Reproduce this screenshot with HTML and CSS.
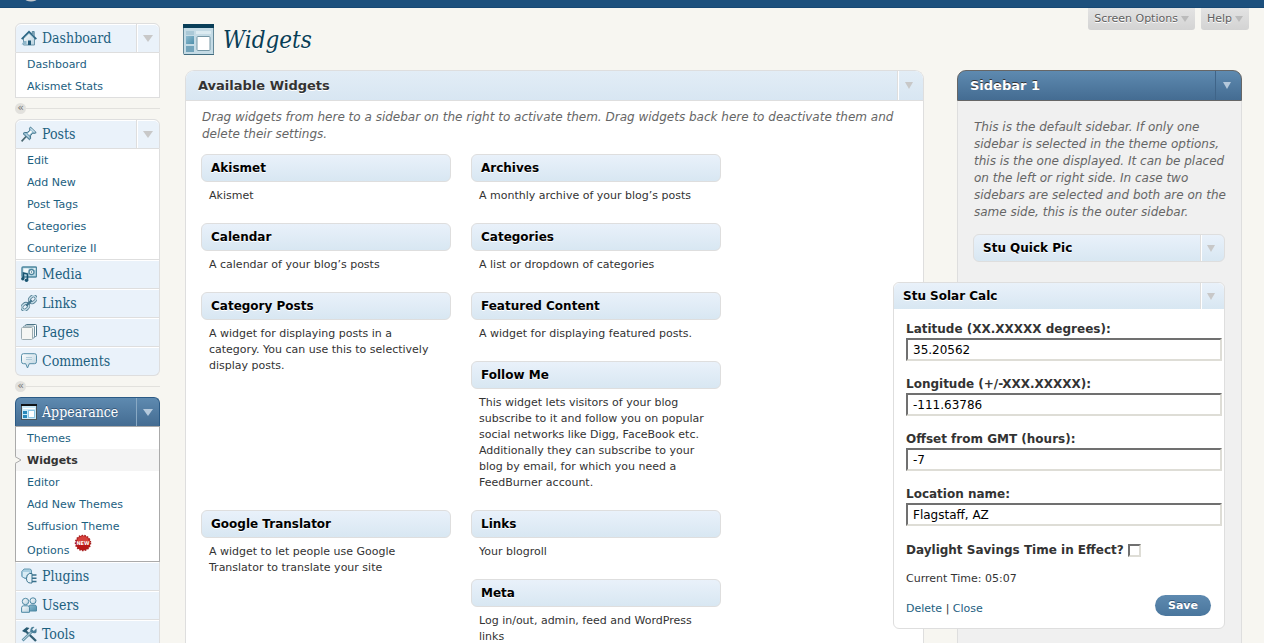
FILE: index.html
```html
<!DOCTYPE html>
<html lang="en">
<head>
<meta charset="utf-8">
<title>Widgets</title>
<link rel="stylesheet" href="styles.css">
</head>
<body>
<svg class="defs" aria-hidden="true">
  <defs>
    <linearGradient id="steel" x1="0" y1="0" x2="0" y2="1"><stop offset="0" stop-color="#bcdcec"/><stop offset="1" stop-color="#5f93ad"/></linearGradient>
    <linearGradient id="pale" x1="0" y1="0" x2="1" y2="1"><stop offset="0" stop-color="#ffffff"/><stop offset="1" stop-color="#b5cfdd"/></linearGradient>
    <linearGradient id="glass" x1="0" y1="0" x2="1" y2="1"><stop offset="0" stop-color="#8dbbd0"/><stop offset="1" stop-color="#4f8faa"/></linearGradient>
  </defs>
</svg>
<header class="topbar"><svg class="logo" width="16" height="2" viewBox="0 0 16 2"><ellipse cx="8" cy="-1" rx="6" ry="2.4" fill="#c3c8cd"/></svg></header>
<div class="page">
  <nav class="menu" aria-label="Main menu">
    <section class="group">
      <div class="top"><a href="#"><svg class="ico" viewBox="0 0 16 16"><path d="M2.500 8v7h11V8L8 3z" fill="url(#pale)" stroke="#6b95aa"/><path d="M.7 9.200 8 1.800l7.300 7.400" fill="none" stroke="#2d6785" stroke-width="1.800"/><path d="M3.500 8 8 3.600 12.500 8" fill="none" stroke="#b7d3e0"/><path d="M11.200 4V1.500h2V6" fill="#8eb0c2" stroke="#467892" stroke-width=".8"/><path d="M7 15v-4.500h3V15z" fill="#235c7a"/><path d="M.5 14.500h5V11H3z" fill="#8fb7cb"/></svg>Dashboard</a><button class="toggle" aria-label="Toggle Dashboard"></button></div>
      <ul><li><a href="#">Dashboard</a></li><li><a href="#">Akismet Stats</a></li></ul>
    </section>
    <button class="fold" aria-label="Collapse menu"><span>«</span></button>
    <section class="group">
      <div class="top"><a href="#"><svg class="ico" viewBox="0 0 16 16"><path d="M.6 15.400 6 9.500" stroke="#49666f" stroke-width="1.600"/><path d="M9.500 1 15.200 6.600 13.500 7.500 11.700 7 9.500 9.800 9.600 12.700 8.400 13.700 2 7.600 3.300 6.500 6.200 6.500 8.900 4.300 8.500 2.300z" fill="url(#steel)" stroke="#46788f"/><path d="M7.500 8.300 10.500 5.200" stroke="#fff" stroke-width="2"/><path d="m4.500 8 4 3.800M10.200 2.800l3.200 3.200" stroke="#e1edf3"/></svg>Posts</a><button class="toggle" aria-label="Toggle Posts"></button></div>
      <ul><li><a href="#">Edit</a></li><li><a href="#">Add New</a></li><li><a href="#">Post Tags</a></li><li><a href="#">Categories</a></li><li><a href="#">Counterize II</a></li></ul>
      <div class="top"><a href="#"><svg class="ico" viewBox="0 0 16 16"><rect x="1" y="1" width="14.500" height="10" rx="1" fill="#b9d8e5" stroke="#4c869f" stroke-width="1.400"/><path d="M2.500 2.500h5v4h-5z" fill="#f3f9fb"/><circle cx="10.500" cy="6" r="2.500" fill="#fff" stroke="#4b849d" stroke-width="1.300"/><circle cx="10.500" cy="6" r=".8" fill="#2f6d89"/><path d="M12.500 3h2" stroke="#fff"/><path d="M2.500 13V7l4 1v6" fill="none" stroke="#195572" stroke-width="1.600"/><circle cx="1.800" cy="12.800" r="1.700" fill="#195572"/><circle cx="5.500" cy="14.200" r="1.800" fill="#195572"/></svg>Media</a></div>
      <div class="top"><a href="#"><svg class="ico" viewBox="0 0 16 16"><g transform="rotate(-45 8 8)" fill="none"><g stroke="#547f94" stroke-width="3"><rect x="-1" y="5.300" width="7.400" height="5.400" rx="2.700"/><rect x="9.600" y="5.300" width="7.400" height="5.400" rx="2.700"/></g><g stroke="#c4dce7" stroke-width="1.400"><rect x="-1" y="5.300" width="7.400" height="5.400" rx="2.700"/><rect x="9.600" y="5.300" width="7.400" height="5.400" rx="2.700"/></g><path d="M4 8h8" stroke="#40728a" stroke-width="2"/></g></svg>Links</a></div>
      <div class="top"><a href="#"><svg class="ico" viewBox="0 0 16 16"><rect x="4.500" y=".5" width="11" height="12" rx="1" fill="#fff" stroke="#4c7487"/><rect x="2.500" y="2" width="11" height="12" rx="1" fill="#eef4f6" stroke="#7294a3"/><rect x=".5" y="3.500" width="11" height="12" rx="1" fill="#f5f6f3" stroke="#9dacb1"/></svg>Pages</a></div>
      <div class="top"><a href="#"><svg class="ico" viewBox="0 0 16 16"><path d="M2.500.7h11q2 0 2 2v6q0 2-2 2H8.300L6.500 15 4.700 10.700H2.500q-2 0-2-2v-6q0-2 2-2z" fill="url(#pale)" stroke="#578ea8"/><path d="M5 4.500h6M5 6.500h6" stroke="#b1ccda"/></svg>Comments</a></div>
    </section>
    <button class="fold" aria-label="Collapse menu"><span>«</span></button>
    <section class="group">
      <div class="top current"><a href="#"><svg class="ico" viewBox="0 0 16 16"><rect x=".5" y=".5" width="15" height="15" fill="#c9e9f8" stroke="#4a5358"/><path d="M0 0h16v2H0z" fill="#101316"/><path d="M2 7h4v3H2zM2 11h4v3H2z" fill="#2789bb"/><path d="M2 4.500h12" stroke="#fff"/><rect x="7.500" y="6.500" width="6" height="7" fill="#fff" stroke="#8cc6e4"/></svg>Appearance</a><button class="toggle" aria-label="Toggle Appearance"></button></div>
      <ul class="open"><li><a href="#">Themes</a></li><li class="here"><svg class="notch" width="7" height="8" viewBox="0 0 7 8"><path d="M0 0 6 4 0 8z" fill="#f7f6f1"/><path d="M0 .5 6 4 0 7.500" fill="none" stroke="#aaa"/></svg><a href="#">Widgets</a></li><li><a href="#">Editor</a></li><li><a href="#">Add New Themes</a></li>
        <li class="tall"><a href="#">Suffusion Theme<br>Options</a><svg class="badge" width="18" height="18" viewBox="0 0 18 18"><circle cx="9" cy="9" r="7.500" fill="#b91616" stroke="#a32020" stroke-width="1.500" stroke-dasharray="1.500 1.300"/><path d="M3 8a6 6 0 0 1 12 0z" fill="#d5413c"/><text x="9" y="11" text-anchor="middle">NEW</text></svg></li></ul>
      <div class="top"><a href="#"><svg class="ico" viewBox="0 0 16 16"><path d="M3 1h5.500q2 0 2 2v6q0 1.500-2 1.500H4L.8 8.500V3.500z" fill="#a9cfe1" stroke="#6599b2"/><path d="M2 4h6v5H2z" fill="#d9ecf5"/><path d="M11 5.500H8.500Q5.500 6 5.500 10.500t4 4.500H11z" fill="#e8f3f8" stroke="#38718c"/><path d="M11 7h4.500M11 10.300h4.500M11 13.500h4.500" stroke="#38718c" stroke-width="1.500"/></svg>Plugins</a></div>
      <div class="top"><a href="#"><svg class="ico" viewBox="0 0 16 16"><g stroke="#4e89a4"><path d="M8 14V9.500Q8 8 10 8h3.500q2 0 2 2v4z" fill="url(#glass)"/><circle cx="12" cy="3.800" r="3" fill="url(#pale)"/><path d="M.6 15.300v-4.500q0-2 2-2H6.500q2 0 2 2v4.500z" fill="url(#pale)"/><circle cx="4.500" cy="4.500" r="3.200" fill="url(#pale)"/></g></svg>Users</a></div>
      <div class="top"><a href="#"><svg class="ico" viewBox="0 0 16 16"><path d="m4 4.500 11 10.500" stroke="#335f74" stroke-width="2.400"/><path d="M1 5 5.500 1.200 8.500 2 4 6.500z" fill="#285a72"/><path d="M1.500 14.500 12 4.500" stroke="#6695aa" stroke-width="2.800"/><path d="M2 14 11 5.500" stroke="#bfd6e0"/><path d="M15.300 2.500 12.800 5 11 3.500 13.500 1Q10.500 0 9.500 3T12 7t3.600-1.600-.3-2.900z" fill="#4b8099"/></svg>Tools</a></div>
    </section>
  </nav>
  <main class="content">
    <div class="heading">
      <svg width="32" height="32" viewBox="0 0 32 32"><rect x=".5" y=".5" width="30" height="30" rx="1" fill="#c5dbe5" stroke="#638797"/><path d="M1 30.500h30" stroke="#426c7f"/><path d="M0 0h31v4H0z" fill="#093e58"/><path d="M3 8h8M3 10h8" stroke="#8fb6c8"/><path d="M3 12h8v8H3z" fill="url(#glass)"/><path d="M3 22h8v6H3z" fill="#73a4bb"/><path d="M13 7h15v3H13z" fill="#dcebf1"/><rect x="14" y="12.500" width="13" height="14" rx="1" fill="#fff" stroke="#7697a5"/></svg>
      <h1>Widgets</h1>
      <div class="tabs"><button>Screen Options <i class="tri"></i></button><button>Help <i class="tri"></i></button></div>
    </div>
    <div class="columns">
      <section class="panel available">
        <div class="bar"><h2>Available Widgets</h2><button class="toggle" aria-label="Toggle Available Widgets"></button></div>
        <p class="intro">Drag widgets from here to a sidebar on the right to activate them. Drag widgets back here to deactivate them and delete their settings.</p>
        <div class="list">
          <article><h3>Akismet</h3><p>Akismet</p></article>
          <article><h3>Archives</h3><p>A monthly archive of your blog’s posts</p></article>
          <article><h3>Calendar</h3><p>A calendar of your blog’s posts</p></article>
          <article><h3>Categories</h3><p>A list or dropdown of categories</p></article>
          <article class="double"><h3>Category Posts</h3><p>A widget for displaying posts in a category. You can use this to selectively display posts.</p></article>
          <article><h3>Featured Content</h3><p>A widget for displaying featured posts.</p></article>
          <article><h3>Follow Me</h3><p>This widget lets visitors of your blog subscribe to it and follow you on popular social networks like Digg, FaceBook etc. Additionally they can subscribe to your blog by email, for which you need a FeedBurner account.</p></article>
          <article class="double"><h3>Google Translator</h3><p>A widget to let people use Google Translator to translate your site</p></article>
          <article><h3>Links</h3><p>Your blogroll</p></article>
          <article><h3>Meta</h3><p>Log in/out, admin, feed and WordPress links</p></article>
        </div>
      </section>
      <section class="panel side">
        <div class="bar dark"><h2>Sidebar 1</h2><button class="toggle" aria-label="Toggle Sidebar 1"></button></div>
        <p class="about">This is the default sidebar. If only one sidebar is selected in the theme options, this is the one displayed. It can be placed on the left or right side. In case two sidebars are selected and both are on the same side, this is the outer sidebar.</p>
        <div class="widget"><div class="whead"><h3>Stu Quick Pic</h3><button class="toggle" aria-label="Toggle Stu Quick Pic"></button></div></div>
        <div class="widget expanded">
          <div class="whead"><h3>Stu Solar Calc</h3><button class="toggle" aria-label="Toggle Stu Solar Calc"></button></div>
          <form>
            <div class="field"><label for="lat">Latitude (XX.XXXXX degrees):</label><input type="text" id="lat" value="35.20562"></div>
            <div class="field"><label for="lon">Longitude (+/-XXX.XXXXX):</label><input type="text" id="lon" value="-111.63786"></div>
            <div class="field"><label for="gmt">Offset from GMT (hours):</label><input type="text" id="gmt" value="-7"></div>
            <div class="field"><label for="loc">Location name:</label><input type="text" id="loc" value="Flagstaff, AZ"></div>
            <div class="check"><label for="dst">Daylight Savings Time in Effect?</label><input type="checkbox" id="dst"></div>
            <p class="time">Current Time: 05:07</p>
            <div class="actions"><span><a href="#">Delete</a> | <a href="#">Close</a></span><button class="save" type="button">Save</button></div>
          </form>
        </div>
      </section>
    </div>
  </main>
</div>
</body>
</html>
```

FILE: styles.css
```css
* { box-sizing: border-box; }
body {
  display: flex;
  flex-direction: column;
  height: 100vh;
  margin: 0;
  overflow: hidden;
  background: #f7f6f1;
  color: #333;
  font: 11px/16px "DejaVu Sans", sans-serif;
}
h1, h2, h3, p, ul { margin: 0; padding: 0; }
a { color: #1c607f; text-decoration: none; }
button { border: 0; padding: 0; background: none; font: inherit; color: inherit; }
.defs { position: absolute; width: 0; height: 0; }
.topbar { flex: none; height: 8px; padding-left: 23px; background: #1d507d; border-bottom: 1px solid #174873; }
.logo { display: block; }
.page { flex: 1; display: flex; gap: 23px; min-height: 0; padding: 0 15px; }

.menu { flex: none; width: 145px; padding-top: 15px; }
.top {
  display: flex;
  height: 29px;
  border: 1px solid #dedede;
  border-top: 0;
  background: #eaf2fa;
  box-shadow: inset 0 1px #fff;
}
.group > .top:first-child { height: 30px; border-top: 1px solid #dedede; border-radius: 6px 6px 0 0; }
.group > .top:last-child { border-radius: 0 0 6px 6px; }
.top a {
  flex: 1;
  display: flex;
  align-items: center;
  gap: 5px;
  padding-left: 5px;
  font: 14px/20px "DejaVu Serif Condensed", "DejaVu Serif", serif;
}
.ico { width: 16px; height: 16px; flex: none; }
.toggle {
  flex: none;
  display: flex;
  align-items: center;
  justify-content: center;
  width: 23px;
  border-left: 1px solid #dedede;
  box-shadow: inset 1px 0 #fff;
}
.toggle::after, .tri { content: ""; border: 5px solid transparent; border-top: 7px solid #c8c8c8; border-bottom: 0; }
.group > .top.current { height: 29px; background: linear-gradient(#5e8ab0, #446c92); border-color: #2b5a85; border-bottom: 0; box-shadow: none; }
.top.current a { color: #fff; text-shadow: 0 -1px #335577; }
.top.current .toggle { border-color: #89a9c4; box-shadow: none; }
.top.current .toggle::after, .dark .toggle::after { border-top-color: #b5c9dc; }
.group ul { list-style: none; background: #fff; border: 1px solid #dedede; border-top: 0; }
.group ul.open { border: 1px solid #aaa; }
.group li { position: relative; padding: 2px 0 0 11px; line-height: 20px; }
.here { background: #f4f4f4; font-weight: bold; }
.here a { color: #333; }
.notch { position: absolute; left: -1px; top: 7px; }
.tall .badge { vertical-align: 2px; margin: -3px 0 0 5px; }
.badge text { font: bold 5px "DejaVu Sans", sans-serif; fill: #fff; }
.fold { display: flex; align-items: center; width: 100%; height: 21px; }
.fold::after { content: ""; flex: 1; height: 1px; background: #e2e1dd; }
.fold span { width: 11px; height: 11px; border-radius: 50%; background: #e2e1dd; color: #777; line-height: 9px; text-align: center; }

.content { flex: 1; display: flex; flex-direction: column; min-width: 0; }
.heading { display: flex; align-items: flex-start; gap: 8px; height: 62px; }
.heading > svg { flex: none; margin-top: 16px; }
h1 {
  flex: 1;
  padding-top: 14px;
  color: #093e56;
  font: italic 24px/36px "DejaVu Serif Condensed", "DejaVu Serif", serif;
  text-shadow: 0 1px #fff;
}
.tabs { display: flex; gap: 6px; }
.tabs button {
  display: flex;
  align-items: center;
  gap: 3px;
  height: 22px;
  padding: 0 6px;
  border-radius: 0 0 3px 3px;
  background: linear-gradient(#e3e3e3, #d3d3d3);
  color: #606060;
  text-shadow: 0 1px #fff;
}
.tri { border-width: 6px 4px 0; border-top-color: #bbb; }
.columns { flex: 1; display: flex; gap: 33px; min-height: 0; margin: 0 7px 0 2px; }
.panel { border: 1px solid #dedede; border-bottom: 0; border-radius: 9px 9px 0 0; }
.available { flex: 1; background: #fff; }
.bar { display: flex; height: 30px; padding-left: 12px; border-bottom: 1px solid #dedede; border-radius: 8px 8px 0 0; background: linear-gradient(#e2edf6, #d8e6f2); }
.bar h2 { flex: 1; font-size: 13px; line-height: 29px; text-shadow: 0 1px #fff; }
.bar .toggle { width: 26px; padding-right: 4px; }
.bar .toggle::after, .whead .toggle::after { border-width: 7px 4px 0; }
.intro { padding: 8px 20px 11px 16px; color: #666; font: italic 12px/17px "DejaVu Sans", sans-serif; }
.list { display: grid; grid-template-columns: 250px 250px; column-gap: 20px; padding-left: 15px; }
.double { grid-row: span 2; }
.list h3, .whead {
  height: 28px;
  border: 1px solid #dedede;
  border-radius: 6px;
  background: linear-gradient(#e9f1fa, #d8e7f2);
}
h3 { color: #000; font-size: 12px; line-height: 26px; padding-left: 9px; text-shadow: 0 1px #fff; }
.list p { padding: 6px 8px 19px; }

.side { flex: none; width: 285px; background: #f0f0f0; }
.dark { margin: -1px -1px 0; height: 31px; border: 1px solid #666; border-radius: 9px 9px 0 0; background: linear-gradient(#5e8ab0, #446c92); }
.dark h2 { color: #fff; text-shadow: 0 -1px #333; }
.dark .toggle { border-color: #3f6488; box-shadow: none; }
.about { padding: 18px 12px 13px 16px; color: #666; font: italic 12px/17px "DejaVu Sans", sans-serif; }
.widget { margin: 0 16px 20px 15px; }
.whead { display: flex; }
.whead h3 { flex: 1; }
.whead .toggle { width: 24px; padding-right: 3px; }
.expanded { position: relative; margin-left: -65px; border: 1px solid #dedede; border-radius: 6px; background: #fff; }
.expanded .whead { height: 26px; border: 0; border-radius: 6px 6px 0 0; }
form { padding: 12px 2px 11px 12px; }
.field { margin-bottom: 15px; }
.field label { display: block; line-height: 17px; }
label { font-size: 12px; font-weight: bold; }
input[type="text"] {
  display: block;
  width: 100%;
  height: 23px;
  padding: 0 5px;
  border: 2px solid;
  border-color: #707070 #deddd6 #deddd6 #707070;
  background: #fff;
  color: #000;
  font: 12px "DejaVu Sans", sans-serif;
}
.check { display: flex; align-items: center; gap: 4px; height: 18px; margin-bottom: 12px; }
input[type="checkbox"] { appearance: none; width: 13px; height: 13px; margin: 0; border: 2px solid; border-color: #707070 #deddd6 #deddd6 #707070; background: #fff; }
.time { margin-bottom: 8px; }
.actions { display: flex; justify-content: space-between; padding-right: 11px; }
.actions span { padding-top: 6px; }
.save { width: 56px; height: 21px; border-radius: 11px; background: linear-gradient(#5e8ab0, #4a769d); color: #fff; font-weight: bold; text-shadow: 0 -1px #335577; }
```
